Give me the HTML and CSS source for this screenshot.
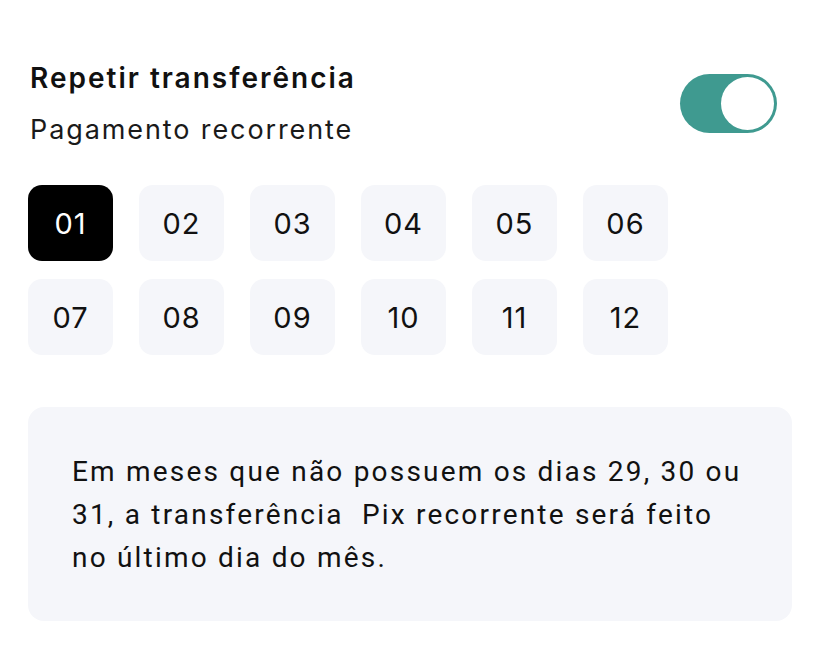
FILE: index.html
```html
<!DOCTYPE html>
<html lang="pt">
<head>
<meta charset="utf-8">
<link rel="stylesheet" href="styles.css">
</head>
<body>
<div class="page">
  <div class="header">
    <div class="titles">
      <div class="title">Repetir transferência</div>
      <div class="subtitle">Pagamento recorrente</div>
    </div>
    <div class="toggle"><div class="knob"></div></div>
  </div>
  <div class="months">
    <div class="month active">01</div>
    <div class="month">02</div>
    <div class="month">03</div>
    <div class="month">04</div>
    <div class="month">05</div>
    <div class="month">06</div>
    <div class="month">07</div>
    <div class="month">08</div>
    <div class="month">09</div>
    <div class="month">10</div>
    <div class="month">11</div>
    <div class="month">12</div>
  </div>
  <div class="info">Em meses que não possuem os dias 29, 30 ou<br>31, a transferência&nbsp; Pix recorrente será feito<br>no último dia do mês.</div>
</div>
</body>
</html>
```
FILE: styles.css
```css
html, body {
  margin: 0;
  padding: 0;
  background: #ffffff;
}
.page {
  padding: 60px 24px 0 28px;
  font-family: "Inter", "Noto Sans", sans-serif;
  color: #111111;
}
.header {
  display: flex;
  justify-content: space-between;
  align-items: flex-start;
  padding-left: 2px;
  padding-right: 15px;
}
.title {
  font-size: 28px;
  font-weight: 600;
  line-height: 36px;
  letter-spacing: 2px;
}
.subtitle {
  font-size: 27px;
  font-weight: 400;
  line-height: 36px;
  margin-top: 16px;
  letter-spacing: 1.9px;
  color: #1a1a1a;
}
.toggle {
  margin-top: 14px;
  width: 97px;
  height: 59px;
  border-radius: 30px;
  background: #3f9a90;
  display: flex;
  justify-content: flex-end;
  align-items: center;
  padding: 3px;
  box-sizing: border-box;
}
.knob {
  width: 53px;
  height: 53px;
  border-radius: 50%;
  background: #ffffff;
}
.months {
  display: grid;
  grid-template-columns: repeat(6, 85px);
  grid-auto-rows: 76px;
  column-gap: 26px;
  row-gap: 18px;
  margin-top: 37px;
}
.month {
  background: #f5f6fa;
  border-radius: 14px;
  display: flex;
  align-items: center;
  justify-content: center;
  font-size: 29px;
  letter-spacing: 1px;
  color: #111111;
}
.month.active {
  background: #000000;
  color: #ffffff;
}
.info {
  margin-top: 52px;
  background: #f5f6fa;
  border-radius: 16px;
  padding: 43px 10px 42px 44px;
  font-family: "Roboto", sans-serif;
  font-size: 28px;
  line-height: 43px;
  letter-spacing: 2.2px;
  color: #111111;
  white-space: nowrap;
}
```
